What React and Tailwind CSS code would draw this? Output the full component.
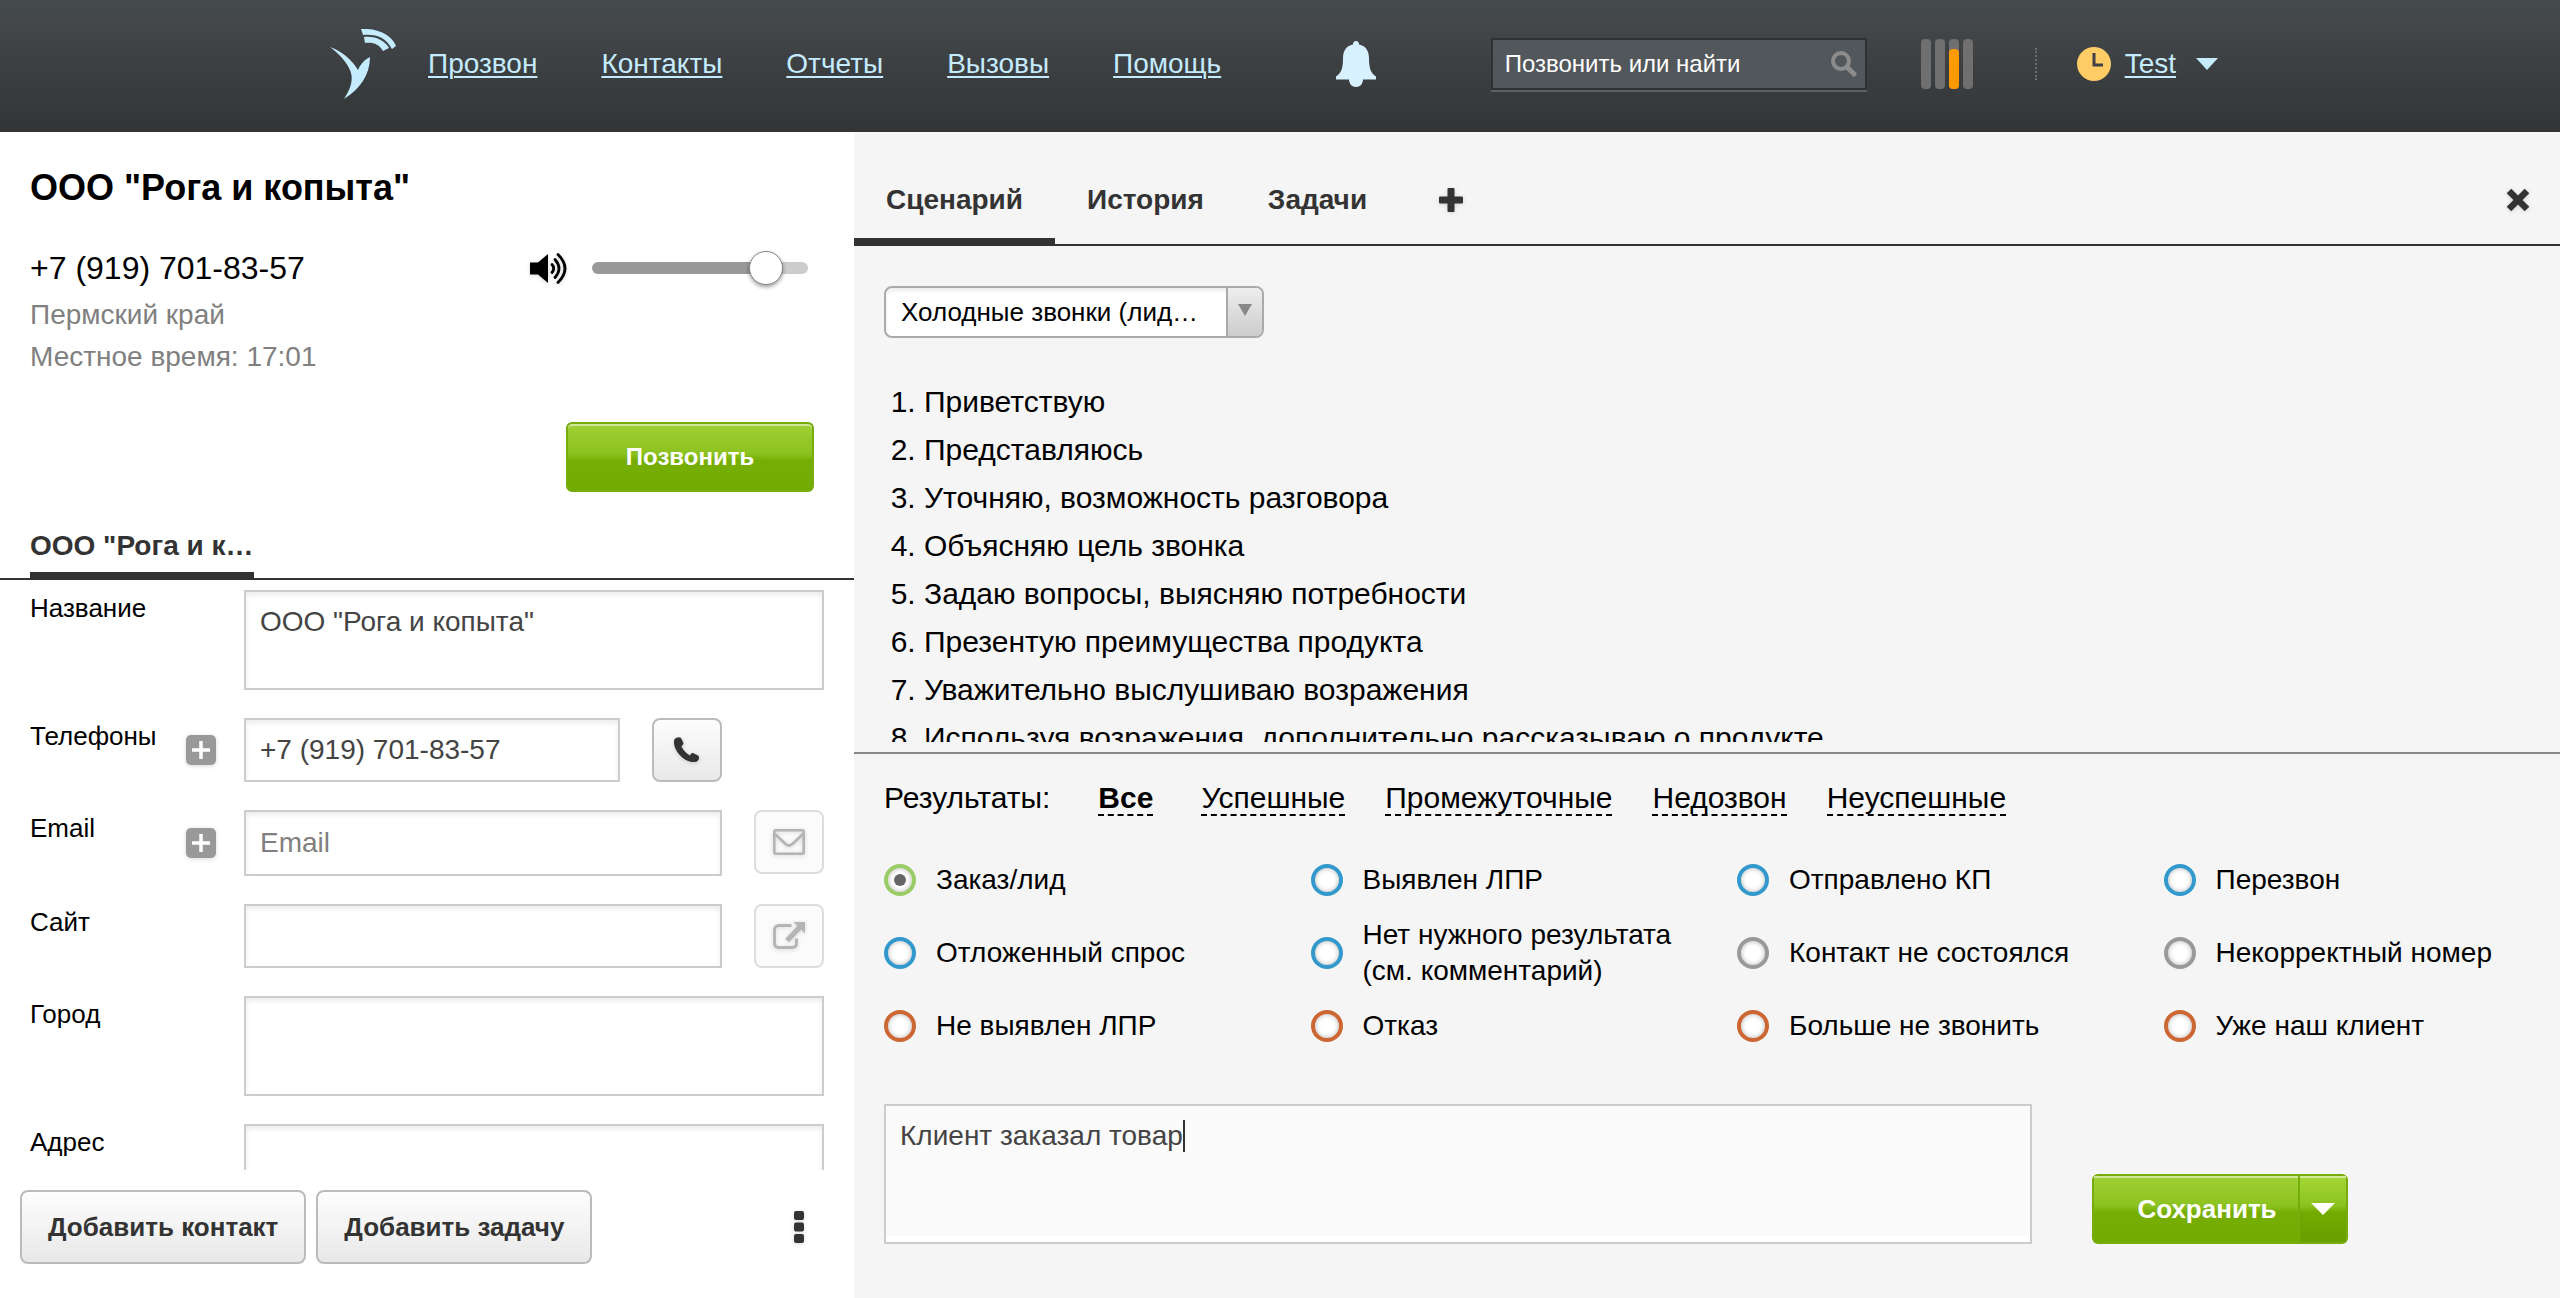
import React, { useState } from 'react';

const NAV = ['Прозвон', 'Контакты', 'Отчеты', 'Вызовы', 'Помощь'];

const SCRIPT_STEPS = [
    'Приветствую',
    'Представляюсь',
    'Уточняю, возможность разговора',
    'Объясняю цель звонка',
    'Задаю вопросы, выясняю потребности',
    'Презентую преимущества продукта',
    'Уважительно выслушиваю возражения',
    'Используя возражения, дополнительно рассказываю о продукте',
];

const FILTERS = ['Все', 'Успешные', 'Промежуточные', 'Недозвон', 'Неуспешные'];

const RESULTS = [
    { label: 'Заказ/лид', ring: 'border-[#99cc66]' },
    { label: 'Выявлен ЛПР', ring: 'border-[#3399cc]' },
    { label: 'Отправлено КП', ring: 'border-[#3399cc]' },
    { label: 'Перезвон', ring: 'border-[#3399cc]' },
    { label: 'Отложенный спрос', ring: 'border-[#3399cc]' },
    { label: 'Нет нужного результата (см. комментарий)', ring: 'border-[#3399cc]' },
    { label: 'Контакт не состоялся', ring: 'border-[#999999]' },
    { label: 'Некорректный номер', ring: 'border-[#999999]' },
    { label: 'Не выявлен ЛПР', ring: 'border-[#cc6633]' },
    { label: 'Отказ', ring: 'border-[#cc6633]' },
    { label: 'Больше не звонить', ring: 'border-[#cc6633]' },
    { label: 'Уже наш клиент', ring: 'border-[#cc6633]' },
];

const fieldClass =
    'block w-full min-w-0 resize-none rounded-none border-2 border-[#ccc] bg-white px-3.5 text-[28px] leading-9 text-[#444] placeholder-[#808080] shadow-[inset_0_3px_5px_rgba(0,0,0,0.08)] outline-none';

const grayButton =
    'rounded-lg border-2 border-[#bbb] bg-linear-to-b from-[#fdfdfd] via-[#f3f3f3] via-50% to-[#e8e8e8] text-[#333]';

const disabledButton = 'rounded-lg border-2 border-[#ddd] bg-[#fbfbfb] text-[#b4b4b4]';

const greenFace =
    'bg-[linear-gradient(#9fd035,#8cc220_45%,#77ae05_55%,#72ab00)] shadow-[inset_0_2px_0_rgba(255,255,255,0.5)] text-white font-bold';

const Logo = () => (
    <svg viewBox="0 0 66 70" className="h-[70px] w-[66px]" fill="#c5ebff">
        <path d="M0 18C12 22 22 31 28 41C30 36 34 31 40 28C40 46 30 60 14 70C22 58 24 48 19 39C15 31 8 24 0 18Z" />
        <path d="M31 0C48 -1 62 6 66 17L62 20C56 9 47 5 33 6Z" />
        <path d="M34 8C46 7 55 12 59 19L53 22C49 15 43 13 35 14Z" />
    </svg>
);

const Bell = () => (
    <svg viewBox="0 0 42 46" className="h-[46px] w-[42px]" fill="#d8f1ff">
        <path d="M21 0c2 0 3 1.500 3 3.500c7 1.500 10 6.500 10 14c0 10 2 15 7 18v3H1v-3c5-3 7-8 7-18c0-7.500 3-12.500 10-14C18 1.500 19 0 21 0z" />
        <path d="M14 38h14c0 5-3 8-7 8s-7-3-7-8z" />
    </svg>
);

const PlusBox = ({ label }) => (
    <button type="button" aria-label={label} className="h-[30px] w-[30px]">
        <svg viewBox="0 0 30 30" className="h-full w-full drop-shadow-sm">
            <rect width="30" height="30" rx="5" fill="#999" />
            <path d="M15 6v18M6 15h18" stroke="#fff" strokeWidth="3.500" />
        </svg>
    </button>
);

const Row = ({ id, label, add, children }) => (
    <div className="flex">
        <div className="flex w-[214px] shrink-0 items-center justify-between pr-7">
            <label htmlFor={id} className="self-start text-[26px] leading-9">{label}</label>
            {add && <PlusBox label={add} />}
        </div>
        <div className="flex min-w-0 flex-1 gap-8">{children}</div>
    </div>
);

const Header = () => (
    <header className="h-[132px] shrink-0 border-b-2 border-[#333] bg-linear-to-b from-[#464b4e] to-[#333536]">
        <div className="mx-auto flex h-32 max-w-[1900px] items-center">
            <a href="#" aria-label="Главная"><Logo /></a>
            <nav className="ml-8 flex gap-16">
                {NAV.map((item) => (
                    <a key={item} href="#" className="text-[28px] leading-9 text-[#c5ebff] underline decoration-2 underline-offset-3">
                        {item}
                    </a>
                ))}
            </nav>
            <div className="ml-auto flex items-center pr-3">
                <button type="button" aria-label="Уведомления"><Bell /></button>
                <div className="ml-[114px] flex h-[52px] w-[376px] items-center border-2 border-[#2f3234] bg-[#52575b] pr-2 shadow-[0_2px_0_#5b6064]">
                    <input
                        aria-label="Поиск"
                        placeholder="Позвонить или найти"
                        className="min-w-0 flex-1 bg-transparent pl-3 text-[24px] text-white placeholder-white outline-none"
                    />
                    <svg viewBox="0 0 26 26" className="h-[26px] w-[26px]" fill="none" stroke="#8c8c8c">
                        <circle cx="10" cy="10" r="8" strokeWidth="4" />
                        <path d="M17 17l6 6" strokeWidth="5" strokeLinecap="round" />
                    </svg>
                </div>
                <svg viewBox="0 0 52 50" className="ml-[54px] h-[50px] w-[52px]">
                    <g fill="#6f6f6f">
                        <rect width="10" height="50" rx="4" />
                        <rect x="14" width="10" height="50" rx="4" />
                        <rect x="28" width="10" height="50" rx="4" />
                        <rect x="42" width="10" height="50" rx="4" />
                    </g>
                    <rect x="28" y="10" width="10" height="40" rx="4" fill="#ff9900" />
                </svg>
                <div className="ml-[62px] h-8 border-l-2 border-dotted border-[#6a6e70]" />
                <svg viewBox="0 0 34 34" className="ml-10 h-[34px] w-[34px]">
                    <circle cx="17" cy="17" r="17" fill="#ffcc66" />
                    <path d="M17 6v12h9" fill="none" stroke="#3f4345" strokeWidth="3" />
                </svg>
                <a href="#" className="ml-3.5 text-[28px] leading-9 text-[#c5ebff] underline decoration-2 underline-offset-3">Test</a>
                <button type="button" aria-label="Меню пользователя" className="ml-5">
                    <svg viewBox="0 0 22 12" className="h-3 w-[22px]" fill="#c5ebff"><path d="M0 0h22L11 12z" /></svg>
                </button>
            </div>
        </div>
    </header>
);

const ContactPanel = () => {
    const [volume, setVolume] = useState(86);

    return (
        <section className="flex w-[33.36%] min-w-0 flex-col bg-white">
            <div className="px-[30px] pt-[34px]">
                <h1 className="text-[36px] leading-[44px] font-bold">ООО "Рога и копыта"</h1>
                <div className="mt-[34px] mb-0.5 flex items-center">
                    <p className="flex-1 text-[32px] leading-[48px]">+7 (919) 701-83-57</p>
                    <svg viewBox="0 0 38 32" className="mr-6 h-8 w-[38px] drop-shadow-sm">
                        <path d="M0 10.500h8L18 2v29l-10-8.500H0z" fill="#000" />
                        <g fill="none" stroke="#000" strokeWidth="2.800" strokeLinecap="round">
                            <path d="M22 12.500q3.500 4 0 8" />
                            <path d="M25 7.500q8 9 0 18" />
                            <path d="M28 2.500q14 14 0 28" />
                        </g>
                    </svg>
                    <input
                        type="range"
                        aria-label="Громкость"
                        value={volume}
                        onChange={(e) => setVolume(e.target.value)}
                        style={{ background: `linear-gradient(to right, #999 ${volume}%, #ccc ${volume}%)` }}
                        className="mr-4 h-3 w-[216px] appearance-none rounded-full [&::-webkit-slider-thumb]:h-[34px] [&::-webkit-slider-thumb]:w-[34px] [&::-webkit-slider-thumb]:appearance-none [&::-webkit-slider-thumb]:rounded-full [&::-webkit-slider-thumb]:border [&::-webkit-slider-thumb]:border-[#888] [&::-webkit-slider-thumb]:bg-white [&::-webkit-slider-thumb]:shadow-[0_2px_4px_rgba(0,0,0,0.4)]"
                    />
                </div>
                <div className="text-[28px] leading-[42px] text-[#808080]">
                    <p>Пермский край</p>
                    <p>Местное время: 17:01</p>
                </div>
                <div className="mt-11 mr-2.5 flex justify-end">
                    <button type="button" className={`h-[70px] w-[248px] rounded-md border-2 border-[#76ac0c] text-[24px] ${greenFace}`}>
                        Позвонить
                    </button>
                </div>
            </div>

            <div className="mt-[34px] flex border-b-2 border-[#333] px-[30px]">
                <button type="button" className="border-b-6 border-[#333] pb-1.5 text-[28px] leading-10 font-bold text-[#333]">
                    ООО "Рога и к…
                </button>
            </div>

            <form className="flex min-h-0 flex-1 flex-col gap-7 overflow-y-auto px-[30px] pt-2.5 [scrollbar-width:none]">
                <Row id="name" label="Название">
                    <textarea id="name" defaultValue={'ООО "Рога и копыта"'} className={`h-[100px] py-3 ${fieldClass}`} />
                </Row>
                <Row id="phone" label="Телефоны" add="Добавить телефон">
                    <input id="phone" defaultValue="+7 (919) 701-83-57" className={`h-16 ${fieldClass}`} />
                    <button type="button" aria-label="Позвонить по номеру" className={`mr-[102px] flex h-16 w-[70px] shrink-0 items-center justify-center ${grayButton}`}>
                        <svg viewBox="0 0 26 26" className="h-[26px] w-[26px] drop-shadow-sm" fill="#333">
                            <path d="M2 1C4 0 6 0 7 1L9 5C10 7 9 7.500 7.500 9C8 12 13 17 16 18.500C17.500 16 18 15.500 20 16.500L24 18.500C26 20 25 23 23 24.500C12 28 -1 14 0 4C0 2.500 1 1.500 2 1Z" />
                        </svg>
                    </button>
                </Row>
                <Row id="email" label="Email" add="Добавить email">
                    <input id="email" type="email" placeholder="Email" className={`h-[66px] ${fieldClass}`} />
                    <button type="button" aria-label="Написать письмо" className={`flex h-16 w-[70px] shrink-0 items-center justify-center ${disabledButton}`}>
                        <svg viewBox="0 0 32 26" className="h-[26px] w-8 drop-shadow-sm" fill="none" stroke="currentColor" strokeWidth="2.600">
                            <rect x="1.300" y="1.300" width="29.400" height="23.400" rx="1.500" />
                            <path d="M2 5l10 9.500q4 4 8 0L30 5" />
                        </svg>
                    </button>
                </Row>
                <Row id="site" label="Сайт">
                    <input id="site" className={`h-16 ${fieldClass}`} />
                    <button type="button" aria-label="Открыть сайт" className={`flex h-16 w-[70px] shrink-0 items-center justify-center ${disabledButton}`}>
                        <svg viewBox="0 0 32 28" className="h-7 w-8 drop-shadow-sm" fill="none" stroke="currentColor">
                            <path d="M18.500 3.500H6Q1.500 3.500 1.500 8v13Q1.500 25.500 6 25.500h13Q23.500 25.500 23.500 21v-4.500" strokeWidth="2.800" />
                            <path d="M27 5L14 18.500" strokeWidth="5" />
                            <path d="M20.500 0H32v11.500z" fill="currentColor" stroke="none" />
                        </svg>
                    </button>
                </Row>
                <Row id="city" label="Город">
                    <textarea id="city" className={`h-[100px] py-3 ${fieldClass}`} />
                </Row>
                <Row id="address" label="Адрес">
                    <textarea id="address" className={`h-[100px] py-3 ${fieldClass}`} />
                </Row>
            </form>

            <div className="flex items-center gap-2.5 pt-5 pr-[50px] pb-[34px] pl-5">
                <button type="button" className={`h-[74px] px-[26px] text-[26px] font-bold ${grayButton}`}>Добавить контакт</button>
                <button type="button" className={`h-[74px] px-[26px] text-[26px] font-bold ${grayButton}`}>Добавить задачу</button>
                <button type="button" aria-label="Ещё" className="ml-auto">
                    <svg viewBox="0 0 10 32" className="h-8 w-2.5 drop-shadow-sm" fill="#333">
                        <rect width="10" height="9" rx="2" />
                        <rect y="11.500" width="10" height="9" rx="2" />
                        <rect y="23" width="10" height="9" rx="2" />
                    </svg>
                </button>
            </div>
        </section>
    );
};

const ScriptPanel = () => {
    const [result, setResult] = useState('Заказ/лид');
    const [filter, setFilter] = useState('Все');

    return (
        <section className="flex min-w-0 flex-1 flex-col bg-[#f5f5f5]">
            <div className="flex items-stretch border-b-2 border-[#333]">
                {['Сценарий', 'История', 'Задачи'].map((tab, i) => (
                    <button
                        key={tab}
                        type="button"
                        className={`border-b-6 px-8 pt-12 pb-[18px] text-[28px] leading-10 font-bold text-[#333] ${i === 0 ? 'border-[#333]' : 'border-transparent'}`}
                    >
                        {tab}
                    </button>
                ))}
                <button type="button" aria-label="Добавить вкладку" className="ml-10 pt-6">
                    <svg viewBox="0 0 24 24" className="h-6 w-6 drop-shadow-sm" fill="#333">
                        <rect x="8.500" width="7" height="24" rx="1" />
                        <rect y="8.500" width="24" height="7" rx="1" />
                    </svg>
                </button>
                <button type="button" aria-label="Закрыть" className="mr-[30px] ml-auto pt-6">
                    <svg viewBox="0 0 24 24" className="h-6 w-6 drop-shadow-sm" stroke="#333" strokeWidth="6.500">
                        <path d="M3 3l18 18M21 3L3 21" />
                    </svg>
                </button>
            </div>

            <div className="min-h-0 flex-1 overflow-y-auto px-[30px] pt-10 [scrollbar-width:none]">
                <div className="relative w-[380px]">
                    <select
                        aria-label="Сценарий"
                        className="h-[52px] w-full appearance-none rounded-lg border-2 border-[#aaa] bg-white pr-12 pl-[15px] text-[26px] shadow-[inset_0_3px_4px_rgba(0,0,0,0.08)] outline-none"
                    >
                        <option>Холодные звонки (лид…</option>
                    </select>
                    <span className="pointer-events-none absolute top-0.5 right-0.5 flex h-12 w-9 items-center justify-center rounded-r-md border-l-2 border-[#aaa] bg-linear-to-b from-[#eee] to-[#ccc]">
                        <svg viewBox="0 0 14 12" className="mb-1 h-3 w-3.5" fill="#888"><path d="M0 0h14L7 12z" /></svg>
                    </span>
                </div>
                <ol className="mt-10 list-decimal pl-10 text-[30px] leading-[48px]">
                    {SCRIPT_STEPS.map((step) => <li key={step}>{step}</li>)}
                </ol>
            </div>

            <div className="mt-2.5 border-t-2 border-[#888] pb-[54px]">
                <div className="flex gap-10 px-[30px] pt-7 text-[30px] leading-8">
                    <span className="mr-2">Результаты:</span>
                    {FILTERS.map((item) => (
                        <button
                            key={item}
                            type="button"
                            onClick={() => setFilter(item)}
                            className={`border-b-2 border-dashed border-black ${item === filter ? 'mr-2 font-bold' : ''}`}
                        >
                            {item}
                        </button>
                    ))}
                </div>

                <div className="mt-[46px] grid grid-cols-4 items-center gap-y-[19px]">
                    {RESULTS.map(({ label, ring }) => (
                        <label key={label} className="flex min-h-9 items-center pr-6 pl-[30px] text-[28px] leading-9">
                            <input
                                type="radio"
                                name="result"
                                checked={result === label}
                                onChange={() => setResult(label)}
                                className={`mr-5 grid h-8 w-8 shrink-0 appearance-none place-items-center rounded-full border-4 bg-white shadow-[inset_0_0_5px_rgba(0,0,0,0.3)] before:h-3 before:w-3 before:rounded-full checked:before:bg-[#666] ${ring}`}
                            />
                            {label}
                        </label>
                    ))}
                </div>

                <div className="mt-[60px] flex items-end gap-[60px] pr-[212px] pl-[30px]">
                    <div className="relative flex-1 border-2 border-[#ccc] bg-white pb-1.5">
                        <textarea
                            aria-label="Комментарий"
                            defaultValue="Клиент заказал товар"
                            className="block h-[130px] w-full resize-none bg-[#fafafa] px-3.5 py-3 text-[28px] leading-9 text-[#444] outline-none"
                        />
                        <span className="absolute top-3.5 left-[297px] h-8 w-0.5 bg-[#333]" />
                    </div>
                    <div className="flex h-[70px] w-64 rounded-md border-2 border-[#76ac0c]">
                        <button type="button" className={`flex-1 pl-[22px] text-[26px] ${greenFace}`}>Сохранить</button>
                        <button
                            type="button"
                            aria-label="Варианты сохранения"
                            className="flex w-12 items-center justify-center border-l-2 border-[#76ac0c] bg-[linear-gradient(#a5d838,#8cc220_45%,#72ab00_55%,#6a9f00)] shadow-[inset_0_2px_0_rgba(255,255,255,0.5)]"
                        >
                            <svg viewBox="0 0 24 12" className="h-3 w-6" fill="#fff"><path d="M0 0h24L12 12z" /></svg>
                        </button>
                    </div>
                </div>
            </div>
        </section>
    );
};

export default function App() {
    return (
        <div className="flex h-screen flex-col bg-white font-['Liberation_Sans',Arial,sans-serif] text-black">
            <Header />
            <main className="flex min-h-0 flex-1">
                <ContactPanel />
                <ScriptPanel />
            </main>
        </div>
    );
}
